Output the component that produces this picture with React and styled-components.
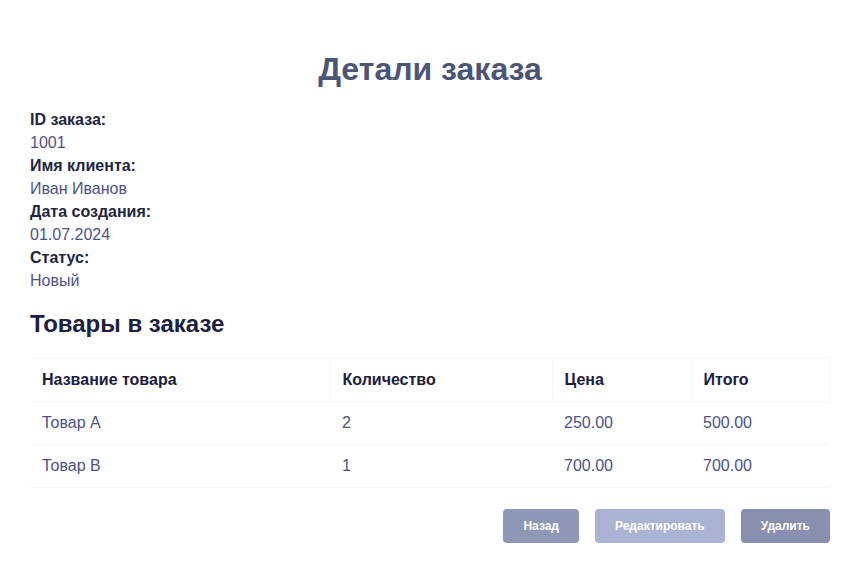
import React from 'react';
import styled, { createGlobalStyle } from 'styled-components';

const GlobalStyle = createGlobalStyle`
  body {
    margin: 0;
    background: #ffffff;
    font-family: "Liberation Sans", Arial, sans-serif;
  }
`;

const Page = styled.div`
  padding: 30px;
  color: #1e2541;
`;

const Title = styled.h1`
  margin: 21px 0 20px;
  text-align: center;
  font-size: 32px;
  line-height: 37px;
  font-weight: 700;
  color: #4b5577;
`;

const Info = styled.div`
  display: flex;
  flex-direction: column;
  font-size: 16px;
  line-height: 23px;
`;

const Label = styled.div`
  font-weight: 700;
  color: #1e2541;
`;

const Value = styled.div`
  color: #4a5288;
`;

const SubTitle = styled.h2`
  margin: 18px 0 20px;
  font-size: 24px;
  line-height: 28px;
  font-weight: 700;
  color: #1a2040;
`;

const Table = styled.table`
  width: 100%;
  border-collapse: collapse;
  table-layout: fixed;
  font-size: 16px;
  line-height: 18px;
`;

const Th = styled.th`
  box-sizing: border-box;
  width: ${(p) => p.$w || 'auto'};
  text-align: left;
  padding: 12px;
  font-weight: 700;
  color: #1a2040;
  border: 1px solid #eff8f6;
  border-left: none;
`;

const Td = styled.td`
  padding: 12px;
  color: #4a5288;
  border-bottom: 1px solid #eff8f6;
`;

const Actions = styled.div`
  display: flex;
  justify-content: flex-end;
  gap: 16px;
  margin-top: 21px;
`;

const Button = styled.button`
  height: 34px;
  border: none;
  border-radius: 4px;
  padding: 0 20px;
  font-family: "Liberation Sans", Arial, sans-serif;
  font-size: 12px;
  font-weight: 700;
  color: #ffffff;
  background: ${(p) => p.$bg};
  cursor: pointer;
`;

const details = [
  ['ID заказа:', '1001'],
  ['Имя клиента:', 'Иван Иванов'],
  ['Дата создания:', '01.07.2024'],
  ['Статус:', 'Новый'],
];

const items = [
  { name: 'Товар A', qty: 2, price: '250.00', total: '500.00' },
  { name: 'Товар B', qty: 1, price: '700.00', total: '700.00' },
];

const App = () => {
  return (
    <>
      <GlobalStyle />
      <Page>
        <Title>Детали заказа</Title>
        <Info>
          {details.map(([label, value]) => (
            <React.Fragment key={label}>
              <Label>{label}</Label>
              <Value>{value}</Value>
            </React.Fragment>
          ))}
        </Info>
        <SubTitle>Товары в заказе</SubTitle>
        <Table>
          <thead>
            <tr>
              <Th $w="300px">Название товара</Th>
              <Th $w="222px">Количество</Th>
              <Th $w="139px">Цена</Th>
              <Th>Итого</Th>
            </tr>
          </thead>
          <tbody>
            {items.map((item) => (
              <tr key={item.name}>
                <Td>{item.name}</Td>
                <Td>{item.qty}</Td>
                <Td>{item.price}</Td>
                <Td>{item.total}</Td>
              </tr>
            ))}
          </tbody>
        </Table>
        <Actions>
          <Button $bg="#8e97b6">Назад</Button>
          <Button $bg="#aab3d3">Редактировать</Button>
          <Button $bg="#8990ae">Удалить</Button>
        </Actions>
      </Page>
    </>
  );
};

export default App;
